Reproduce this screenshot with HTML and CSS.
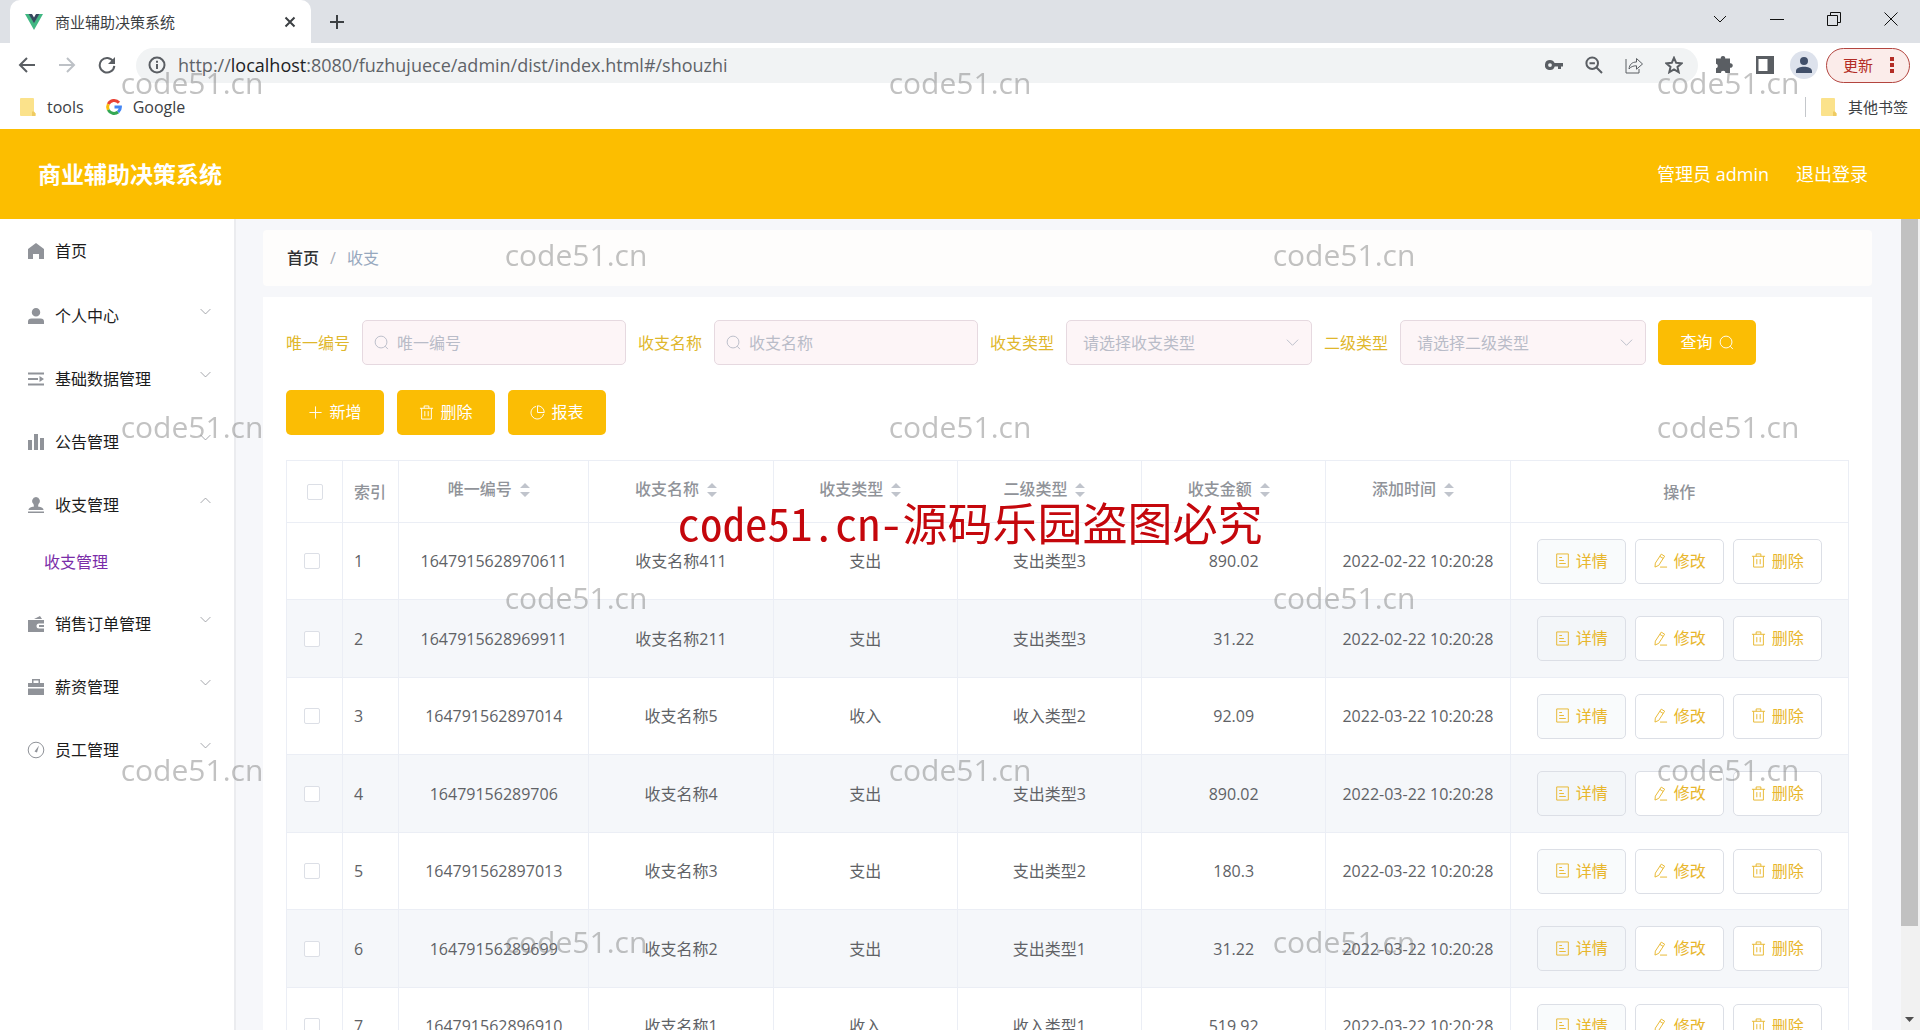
FILE: index.html
```html
<!DOCTYPE html>
<html lang="zh-CN">
<head>
<meta charset="utf-8">
<title>商业辅助决策系统</title>
<link rel="stylesheet" href="styles.css">
</head>
<body>
<svg class="sprite" aria-hidden="true">
  <symbol id="search" viewBox="0 0 16 16"><circle cx="7.500" cy="7.500" r="6.300"/><path d="M12 12l2.800 3"/></symbol>
  <symbol id="down" viewBox="0 0 16 16"><path d="M2 5l6 6 6-6"/></symbol>
  <symbol id="up" viewBox="0 0 16 16"><path d="M2 11l6-6 6 6"/></symbol>
  <symbol id="plus" viewBox="0 0 16 16"><path d="M8 1.500v13M1.500 8h13"/></symbol>
  <symbol id="trash" viewBox="0 0 16 16"><path d="M1 3.500h14M2.800 3.500v11.500h10.400V3.500M5.500 3.500V1h5v2.500M6.200 6.500v5.500M9.800 6.500v5.500"/></symbol>
  <symbol id="pie" viewBox="0 0 16 16"><path d="M6.500 1.500A6.800 6.800 0 1 0 14.500 9.500M8 .8V8h7.200A7.200 7.200 0 0 0 8 .8z"/></symbol>
  <symbol id="doc" viewBox="0 0 16 16"><path d="M1.800 1h12.400v14H1.800zM4.500 4.800h3M4.500 8h5M4.500 11.200h7"/></symbol>
  <symbol id="edit" viewBox="0 0 16 16"><path d="M8.800 1.200l3.600 2.200-6.300 9.800-4 1.800.4-4.200zM7.300 3.600l3.600 2.200M7.500 15h7.500"/></symbol>
  <symbol id="sort" viewBox="0 0 10 16"><path d="M5 1l5 5H0zM5 15l5-5H0z"/></symbol>
  <symbol id="folder" viewBox="0 0 16 18"><path fill="#fbe28b" d="M1 0h12a1 1 0 0 1 1 1v13l1.500 1.500V17a1 1 0 0 1-1 1H1a1 1 0 0 1-1-1V1a1 1 0 0 1 1-1z"/><path fill="#efcb62" d="M12 13.500h2l1.500 2V18H12z"/></symbol>
</svg>

<div class="tabstrip">
  <div class="tab">
    <svg class="i18" viewBox="0 0 18 18"><path fill="#41b883" d="M0 1h4l5 8.500L14 1h4L9 17z"/><path fill="#35495e" d="M3.600 1H7l2 3.500L11 1h3.400L9 10.300z"/></svg>
    <span class="tab-title">商业辅助决策系统</span>
    <button class="plain" aria-label="关闭标签页"><svg class="i12 line2" viewBox="0 0 12 12"><path d="M1.500 1.500l9 9M10.500 1.500l-9 9"/></svg></button>
  </div>
  <button class="plain new-tab" aria-label="新标签页"><svg class="i16 line2" viewBox="0 0 16 16"><path d="M8 1v14M1 8h14"/></svg></button>
  <div class="window-controls">
    <button class="plain" aria-label="搜索标签页"><svg class="i16 thin" viewBox="0 0 16 16"><path d="M2 5l6 6 6-6"/></svg></button>
    <button class="plain" aria-label="最小化"><svg class="i14 thin" viewBox="0 0 14 14"><path d="M0 7.500h14"/></svg></button>
    <button class="plain" aria-label="还原"><svg class="i14 thin" viewBox="0 0 14 14"><path d="M.5 3.500h10v10H.5zM3.500 3V.5h10v10H11"/></svg></button>
    <button class="plain" aria-label="关闭"><svg class="i14 thin" viewBox="0 0 14 14"><path d="M.5.5l13 13M13.500.5l-13 13"/></svg></button>
  </div>
</div>

<div class="toolbar">
  <div class="nav">
    <button class="plain" aria-label="后退"><svg class="i18 line2" viewBox="0 0 18 18"><path d="M17 9H2M9 2L2 9l7 7"/></svg></button>
    <button class="plain dim" aria-label="前进"><svg class="i18 line2" viewBox="0 0 18 18"><path d="M1 9h15M9 2l7 7-7 7"/></svg></button>
    <button class="plain" aria-label="刷新"><svg class="i18 line2" viewBox="0 0 18 18"><path d="M15.300 5.500A7.300 7.300 0 1 0 16.300 9.800"/><path class="solid" d="M17 1v7h-7z"/></svg></button>
  </div>
  <div class="address">
    <svg class="i18 line2" viewBox="0 0 18 18"><circle cx="9" cy="9" r="7.500"/><path d="M9 8v5M9 4.800v2"/></svg>
    <span class="url">http://<b>localhost</b>:8080/fuzhujuece/admin/dist/index.html#/shouzhi</span>
    <div class="address-tools">
      <svg class="i18" viewBox="0 0 18 18"><path fill="#5a5e63" fill-rule="evenodd" d="M5 4a5 5 0 1 0 4.700 6.500h3.300V13h3v-2.500h2V7H9.600A5 5 0 0 0 5 4zm0 3.200a1.900 1.900 0 1 1 0 3.800 1.900 1.900 0 0 1 0-3.800z"/></svg>
      <svg class="i18 line2" viewBox="0 0 18 18"><circle cx="7.200" cy="7.200" r="5.800"/><path d="M11.500 11.500L17 17M4.500 7.200h5.400"/></svg>
      <svg class="i18 share" viewBox="0 0 18 18"><path d="M1 3v14h13v-4M4 13c.5-4.500 3-7 7.500-7V2.500L17.500 8l-6 5.200V9.800C8 9.800 6 10.700 4 13z"/></svg>
      <svg class="i18 line2" viewBox="0 0 18 18"><path d="M9 1.800l2.200 5 5.400.5-4.100 3.600 1.200 5.300L9 13.400l-4.700 2.800 1.200-5.300-4.100-3.600 5.400-.5z"/></svg>
    </div>
  </div>
  <div class="tools">
    <svg class="i18" viewBox="0 0 18 18"><path fill="#5a5e63" d="M7 0a2.200 2.200 0 0 1 2.200 2.500H14v4.800a2.300 2.300 0 1 1 0 4.500V17H9.500a2.300 2.300 0 1 0-4.600 0H0v-4.800a2.300 2.300 0 0 0 0-4.500V2.500h4.800A2.200 2.200 0 0 1 7 0z"/></svg>
    <svg class="i18" viewBox="0 0 18 18"><path fill="#5a5e63" fill-rule="evenodd" d="M0 0h18v18H0zM2.500 3v12h9V3z"/></svg>
    <span class="avatar"><svg class="i18" viewBox="0 0 18 18"><path fill="#41506a" d="M9 1a4 4 0 1 1 0 8 4 4 0 0 1 0-8zM1 17v-2c0-3 4.500-4.300 8-4.300s8 1.300 8 4.300v2z"/></svg></span>
    <button class="update">更新<svg class="dots" viewBox="0 0 4 16"><path d="M0 0h4v4H0zM0 6h4v4H0zM0 12h4v4H0z"/></svg></button>
  </div>
</div>

<div class="bookmarks">
  <a href="#tools"><svg class="folder"><use href="#folder"/></svg>tools</a>
  <a href="#google"><svg class="i16" viewBox="0 0 16 16"><g fill="none" stroke-width="3"><path stroke="#ea4335" d="M13 3.700A6.400 6.400 0 0 0 2.300 5.200"/><path stroke="#fbbc05" d="M2.300 5.200a6.400 6.400 0 0 0 0 5.600"/><path stroke="#34a853" d="M2.300 10.800a6.400 6.400 0 0 0 9.800 2.200"/><path stroke="#4285f4" d="M12.100 13a6.400 6.400 0 0 0 2.300-5H8.500"/></g></svg>Google</a>
  <a class="other" href="#other"><svg class="folder"><use href="#folder"/></svg>其他书签</a>
</div>

<header class="topbar">
  <h1>商业辅助决策系统</h1>
  <span>管理员 admin</span>
  <a href="#logout">退出登录</a>
</header>

<div class="body">
  <nav class="sidebar">
    <a class="item home" href="#home"><svg class="i16 fill" viewBox="0 0 16 16"><path d="M8 0l8 6v10h-5v-5H5v5H0V6z"/></svg>首页</a>
    <a class="item" href="#me"><svg class="i16 fill" viewBox="0 0 16 16"><path d="M8 0a4.200 4.200 0 1 1 0 8.500A4.200 4.200 0 0 1 8 0zM0 16v-2.500Q0 10.500 3.500 10.500h9q3.500 0 3.500 3V16z"/></svg>个人中心<svg class="caret"><use href="#down"/></svg></a>
    <a class="item" href="#base"><svg class="i16 fill" viewBox="0 0 16 16"><path d="M0 1.500h16v2H0zM0 7h10v2H0zM11.500 5l4.500 3-4.500 3zM0 12.500h16v2H0z"/></svg>基础数据管理<svg class="caret"><use href="#down"/></svg></a>
    <a class="item" href="#notice"><svg class="i16 fill" viewBox="0 0 16 16"><path d="M0 6h4v10H0zM6 0h4v16H6zM12 4h4v12h-4z"/></svg>公告管理<svg class="caret"><use href="#down"/></svg></a>
    <a class="item" href="#money"><svg class="i16 fill" viewBox="0 0 16 16"><path d="M8 0a4 4 0 0 1 2.500 7l-.5 2.500q5.500.5 5.500 3.500H.5q0-3 5.500-3.500L5.500 7A4 4 0 0 1 8 0zM0 14.500h16V16H0z"/></svg>收支管理<svg class="caret"><use href="#up"/></svg></a>
    <a class="subitem" href="#shouzhi">收支管理</a>
    <a class="item" href="#orders"><svg class="i16 fill" viewBox="0 0 16 16"><path fill-rule="evenodd" d="M0 4h16v3.500h-5a2.500 2.500 0 0 0 0 5h5V16H0zM11 9h5v2h-5zM6 3l6-3 2 3z"/></svg>销售订单管理<svg class="caret"><use href="#down"/></svg></a>
    <a class="item" href="#salary"><svg class="i16 fill" viewBox="0 0 16 16"><path fill-rule="evenodd" d="M4 0h8v4h4v4H0V4h4zM5.500 1.500V4h5V1.500zM0 9.500h16V16H0z"/></svg>薪资管理<svg class="caret"><use href="#down"/></svg></a>
    <a class="item" href="#staff"><svg class="i16 gauge" viewBox="0 0 16 16"><circle cx="8" cy="8" r="7.800"/><path class="solid" d="M11 3.500L9 10.500l-2.500-1z"/></svg>员工管理<svg class="caret"><use href="#down"/></svg></a>
  </nav>

  <main class="main">
    <div class="crumbs"><a href="#home">首页</a><i>/</i><span>收支</span></div>
    <section class="card">
      <form class="filters">
        <label for="code">唯一编号</label>
        <div class="field"><svg class="lead"><use href="#search"/></svg><input id="code" type="text" placeholder="唯一编号"></div>
        <label for="name">收支名称</label>
        <div class="field"><svg class="lead"><use href="#search"/></svg><input id="name" type="text" placeholder="收支名称"></div>
        <label for="kind">收支类型</label>
        <div class="field pick"><select id="kind"><option>请选择收支类型</option><option>收入</option><option>支出</option></select><svg class="trail"><use href="#down"/></svg></div>
        <label for="sub">二级类型</label>
        <div class="field pick"><select id="sub"><option>请选择二级类型</option><option>支出类型1</option><option>收入类型2</option></select><svg class="trail"><use href="#down"/></svg></div>
        <button class="primary" type="button">查询<svg><use href="#search"/></svg></button>
      </form>
      <div class="actions">
        <button class="primary"><svg><use href="#plus"/></svg>新增</button>
        <button class="primary"><svg><use href="#trash"/></svg>删除</button>
        <button class="primary"><svg><use href="#pie"/></svg>报表</button>
      </div>
      <table class="grid">
        <colgroup><col class="c-check"><col class="c-index"><col class="c-code"><col class="c-data"><col class="c-data"><col class="c-data"><col class="c-data"><col class="c-data"><col class="c-ops"></colgroup>
        <thead><tr>
          <th><input type="checkbox" aria-label="全选"></th>
          <th class="left">索引</th>
          <th class="sortable">唯一编号<svg><use href="#sort"/></svg></th>
          <th class="sortable">收支名称<svg><use href="#sort"/></svg></th>
          <th class="sortable">收支类型<svg><use href="#sort"/></svg></th>
          <th class="sortable">二级类型<svg><use href="#sort"/></svg></th>
          <th class="sortable">收支金额<svg><use href="#sort"/></svg></th>
          <th class="sortable">添加时间<svg><use href="#sort"/></svg></th>
          <th>操作</th>
        </tr></thead>
        <tbody>
          <tr><td class="check"><input type="checkbox" aria-label="选择第1行"></td><td class="left">1</td><td>1647915628970611</td><td>收支名称411</td><td>支出</td><td>支出类型3</td><td>890.02</td><td>2022-02-22 10:20:28</td><td><div class="ops"><button class="detail"><svg><use href="#doc"/></svg>详情</button><button><svg><use href="#edit"/></svg>修改</button><button><svg><use href="#trash"/></svg>删除</button></div></td></tr>
          <tr><td class="check"><input type="checkbox" aria-label="选择第2行"></td><td class="left">2</td><td>1647915628969911</td><td>收支名称211</td><td>支出</td><td>支出类型3</td><td>31.22</td><td>2022-02-22 10:20:28</td><td><div class="ops"><button class="detail"><svg><use href="#doc"/></svg>详情</button><button><svg><use href="#edit"/></svg>修改</button><button><svg><use href="#trash"/></svg>删除</button></div></td></tr>
          <tr><td class="check"><input type="checkbox" aria-label="选择第3行"></td><td class="left">3</td><td>164791562897014</td><td>收支名称5</td><td>收入</td><td>收入类型2</td><td>92.09</td><td>2022-03-22 10:20:28</td><td><div class="ops"><button class="detail"><svg><use href="#doc"/></svg>详情</button><button><svg><use href="#edit"/></svg>修改</button><button><svg><use href="#trash"/></svg>删除</button></div></td></tr>
          <tr><td class="check"><input type="checkbox" aria-label="选择第4行"></td><td class="left">4</td><td>16479156289706</td><td>收支名称4</td><td>支出</td><td>支出类型3</td><td>890.02</td><td>2022-03-22 10:20:28</td><td><div class="ops"><button class="detail"><svg><use href="#doc"/></svg>详情</button><button><svg><use href="#edit"/></svg>修改</button><button><svg><use href="#trash"/></svg>删除</button></div></td></tr>
          <tr><td class="check"><input type="checkbox" aria-label="选择第5行"></td><td class="left">5</td><td>164791562897013</td><td>收支名称3</td><td>支出</td><td>支出类型2</td><td>180.3</td><td>2022-03-22 10:20:28</td><td><div class="ops"><button class="detail"><svg><use href="#doc"/></svg>详情</button><button><svg><use href="#edit"/></svg>修改</button><button><svg><use href="#trash"/></svg>删除</button></div></td></tr>
          <tr><td class="check"><input type="checkbox" aria-label="选择第6行"></td><td class="left">6</td><td>16479156289699</td><td>收支名称2</td><td>支出</td><td>支出类型1</td><td>31.22</td><td>2022-03-22 10:20:28</td><td><div class="ops"><button class="detail"><svg><use href="#doc"/></svg>详情</button><button><svg><use href="#edit"/></svg>修改</button><button><svg><use href="#trash"/></svg>删除</button></div></td></tr>
          <tr><td class="check"><input type="checkbox" aria-label="选择第7行"></td><td class="left">7</td><td>164791562896910</td><td>收支名称1</td><td>收入</td><td>收入类型1</td><td>519.92</td><td>2022-03-22 10:20:28</td><td><div class="ops"><button class="detail"><svg><use href="#doc"/></svg>详情</button><button><svg><use href="#edit"/></svg>修改</button><button><svg><use href="#trash"/></svg>删除</button></div></td></tr>
        </tbody>
      </table>
    </section>
  </main>

  <div class="scrollbar"><div class="thumb"></div><svg viewBox="0 0 9 5"><path d="M0 0h9L4.500 5z"/></svg></div>
</div>

<div class="marks" aria-hidden="true">
  <span>code51.cn</span><span></span><span>code51.cn</span><span></span><span>code51.cn</span>
  <span></span><span>code51.cn</span><span></span><span>code51.cn</span><span></span>
  <span>code51.cn</span><span></span><span>code51.cn</span><span></span><span>code51.cn</span>
  <span></span><span>code51.cn</span><span></span><span>code51.cn</span><span></span>
  <span>code51.cn</span><span></span><span>code51.cn</span><span></span><span>code51.cn</span>
  <span></span><span>code51.cn</span><span></span><span>code51.cn</span><span></span>
</div>
<div class="notice">code51.cn-源码乐园盗图必究</div>
</body>
</html>
```
FILE: styles.css
```css
* { box-sizing: border-box; }
body {
  margin: 0;
  height: 100vh;
  overflow: hidden;
  display: flex;
  flex-direction: column;
  background: #fff;
  color: #606266;
  font: 16px/24px "Open Sans", "Noto Sans CJK SC", sans-serif;
}
a { color: inherit; text-decoration: none; }
button, input, select { font: inherit; color: inherit; margin: 0; }
button { cursor: pointer; }
svg { flex: none; fill: none; stroke: currentColor; }
.sprite { display: none; }
.i12 { width: 12px; height: 12px; }
.i14 { width: 14px; height: 14px; }
.i16 { width: 16px; height: 16px; }
.i18 { width: 18px; height: 18px; }
.line2 { stroke-width: 2; }
.thin { stroke-width: 1; }
.solid { fill: currentColor; stroke: none; }
.plain { display: grid; place-items: center; padding: 0; border: 0; background: none; }

/* browser frame */
.tabstrip {
  flex: none;
  display: flex;
  align-items: center;
  height: 43px;
  padding: 0 1px 0 10px;
  background: #dee1e6;
  color: #3c4043;
}
.tab {
  display: flex;
  align-items: center;
  gap: 10px;
  width: 301px;
  height: 100%;
  padding: 0 15px;
  border-radius: 10px 10px 0 0;
  background: #fff;
  font-size: 15px;
}
.tab svg, .bookmarks svg, .tools > svg, .avatar svg { overflow: visible; }
.tab > .i18, .folder, .bookmarks .i16, .tools > svg, .avatar svg { stroke: none; }
.fill { fill: currentColor; stroke: none; }
.tab-title { flex: 1; padding-left: 2px; }
.new-tab { margin-left: 18px; }
.window-controls { display: flex; margin-left: auto; padding-bottom: 6px; color: #111; }
.window-controls .plain { width: 57px; height: 28px; }

.toolbar {
  flex: none;
  display: flex;
  align-items: center;
  height: 45px;
  padding: 0 10px 1px 18px;
  color: #5a5e63;
}
.nav { display: flex; gap: 22px; width: 118px; }
.dim { color: #bdc1c6; }
.address {
  flex: 1;
  display: flex;
  align-items: center;
  height: 35px;
  padding: 0 15px 0 12px;
  border-radius: 18px;
  background: #f1f3f4;
}
.url { flex: 1; padding: 0 0 1px 12px; font-size: 18px; color: #5f6368; }
.url b { font-weight: 400; color: #202124; }
.address-tools { display: flex; gap: 22px; }
.address-tools .i18:first-child { stroke: none; }
.tools { display: flex; align-items: center; gap: 22px; margin-left: 18px; }
.avatar {
  display: grid;
  place-items: center;
  width: 28px;
  height: 28px;
  margin: 0 -6px;
  border-radius: 50%;
  background: #dde2ec;
}
.update {
  display: flex;
  align-items: center;
  justify-content: space-between;
  width: 84px;
  height: 35px;
  margin-left: -8px;
  padding: 0 15px 0 16px;
  border: 1px solid #b3453f;
  border-radius: 18px;
  background: #fbecea;
  color: #b32c25;
  font-size: 15px;
}
.dots { width: 4px; height: 16px; fill: currentColor; stroke: none; }

.bookmarks {
  flex: none;
  display: flex;
  align-items: center;
  gap: 22px;
  height: 41px;
  padding: 0 12px 4px 20px;
  color: #3c4043;
}
.bookmarks a { display: flex; align-items: center; gap: 11px; }
.folder { width: 16px; height: 18px; }
.bookmarks .other { margin-left: auto; padding-left: 15px; border-left: 1px solid #c4c7cb; font-size: 15px; line-height: 20px; }

/* application header */
.topbar {
  flex: none;
  display: flex;
  align-items: center;
  gap: 27px;
  height: 90px;
  padding: 0 52px 0 38px;
  background: #fcbe00;
  color: #fff;
  font-size: 18px;
}
.topbar h1 { flex: 1; margin: 0; font-size: 23px; font-weight: 700; }

.body { flex: 1; min-height: 0; display: flex; background: #f6f7fa; }
.sidebar { flex: none; width: 236px; border-right: 2px solid #ebecef; background: #fff; color: #1c1c1c; }
.item { display: flex; align-items: center; gap: 11px; height: 63px; padding: 0 22px 0 28px; }
.home { height: 65px; padding-bottom: 2px; }
.item > .i16 { color: #909399; }
.gauge { overflow: visible; stroke-width: 1; }
.caret { width: 13px; height: 13px; margin: 0 0 8px auto; color: #909399; }
.caret use, .sortable use { pointer-events: none; }
.subitem { display: flex; align-items: center; height: 56px; padding: 0 0 4px 44px; color: #7a2da8; }

.main { flex: 1; min-width: 0; overflow: hidden; padding: 11px 29px 0 27px; }
.crumbs {
  display: flex;
  align-items: center;
  gap: 11px;
  height: 56px;
  margin-bottom: 11px;
  padding: 0 24px;
  border-radius: 4px;
  background: #fefdfc;
  color: #97a8be;
}
.crumbs a { color: #303133; font-weight: 500; }
.crumbs i { font-style: normal; color: #a8adb8; }
.card { padding: 23px 23px 24px; background: #fff; }
.filters { display: flex; flex-wrap: wrap; align-items: center; gap: 12px; color: #dfb72c; }
.field { position: relative; width: 264px; height: 45px; color: #b9bcc8; }
.pick { width: 246px; }
.field input, .field select {
  width: 100%;
  height: 100%;
  padding: 0 14px 0 34px;
  border: 1px solid #e6d9e0;
  border-radius: 5px;
  outline: 0;
  appearance: none;
  background: #fdf5f7;
}
.field select { padding: 0 34px 0 16px; }
.field input::placeholder { color: #b9bcc8; opacity: 1; }
.lead, .trail { position: absolute; top: 15px; width: 15px; height: 15px; pointer-events: none; }
.lead { left: 12px; }
.trail { right: 12px; }
.primary {
  display: flex;
  align-items: center;
  justify-content: center;
  gap: 6px;
  width: 98px;
  height: 45px;
  padding: 0 0 1px;
  border: 0;
  border-radius: 5px;
  background: #fbbd04;
  color: #fff;
}
.primary svg, .ops svg { width: 15px; height: 15px; }
.actions { display: flex; gap: 13px; margin: 25px 0; }

.grid {
  width: 100%;
  table-layout: fixed;
  border-collapse: collapse;
  border: 1px solid #ebeef5;
}
.c-check { width: 56px; }
.c-index { width: 56px; }
.c-code { width: 190px; }
.c-data { width: 184px; }
.c-ops { width: 338px; }
.grid th, .grid td { padding: 0; border: 1px solid #ebeef5; text-align: center; }
.grid .left { padding-left: 11px; text-align: left; }
.grid th { height: 62px; color: #909399; font-weight: 500; }
.grid .sortable { padding-bottom: 6px; }
.sortable svg { width: 10px; height: 16px; margin: 0 10px 0 8px; vertical-align: -3px; fill: #c0c4cc; stroke: none; }
.grid td { height: 77px; }
.grid tr:nth-child(even) td { height: 78px; background: #f5f7fa; }
.grid .check { padding-right: 5px; }
.grid input {
  display: block;
  width: 16px;
  height: 16px;
  margin: 0 auto;
  border: 1px solid #dcdfe6;
  border-radius: 2px;
  appearance: none;
  background: #fff;
}
.ops { display: flex; justify-content: center; gap: 9px; }
.ops button {
  display: flex;
  align-items: center;
  justify-content: center;
  gap: 6px;
  width: 89px;
  height: 45px;
  padding: 0 0 1px;
  border: 1px solid #dcdfe6;
  border-radius: 5px;
  background: #fff;
  color: #e8b62c;
}
.ops .detail { background: rgba(240, 244, 248, 0.4); }

.scrollbar {
  flex: none;
  display: flex;
  flex-direction: column;
  align-items: center;
  justify-content: space-between;
  width: 19px;
  padding: 0 2px 8px 0;
  background: #f1f1f1;
}
.thumb { width: 100%; height: 88%; background: #c1c1c1; }
.scrollbar svg { width: 9px; height: 5px; fill: #505050; stroke: none; }

/* watermark layer */
.marks {
  position: fixed;
  inset: 0;
  display: grid;
  grid-template: repeat(6, 1fr) / repeat(5, 1fr);
  place-items: center;
  pointer-events: none;
  color: rgba(120, 120, 120, 0.45);
  font-size: 30px;
  line-height: 40px;
}
.marks span { padding-bottom: 5px; }
.notice {
  position: fixed;
  top: 522px;
  left: 50%;
  transform: translate(-50%, -50%);
  margin-left: 10px;
  white-space: nowrap;
  pointer-events: none;
  color: #c4070c;
  font: 45px/60px "Noto Sans CJK SC", sans-serif;
  font-feature-settings: "hwid";
}
```
